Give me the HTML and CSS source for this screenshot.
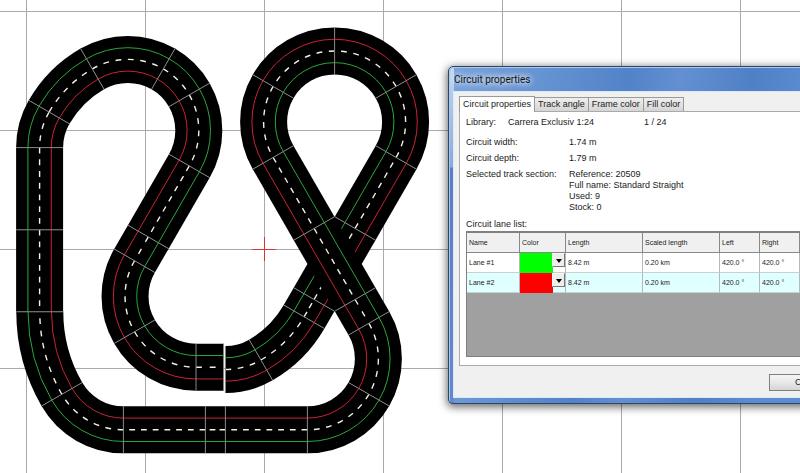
FILE: index.html
```html
<!DOCTYPE html>
<html lang="en">
<head>
<meta charset="utf-8">
<title>Circuit properties</title>
<link rel="stylesheet" href="styles.css">
</head>
<body>
<main class="desk">
  <svg class="canvas" role="img" aria-label="Circuit layout">
    <defs>
      <pattern id="grid" x="26" y="11" width="119" height="119" patternUnits="userSpaceOnUse">
        <path class="grid-line" d="M0.5 0V119M0 0.5H119"/>
      </pattern>
    </defs>
    <rect width="100%" height="100%" fill="url(#grid)"/>
    <path class="origin" d="M252 249.5H276M264.5 237V261"/>
    <g id="track"></g>
  </svg>

  <section class="dialog" role="dialog" aria-labelledby="dialog-title">
    <h1 class="title" id="dialog-title">Circuit properties</h1>
    <div class="client">
      <div class="tabs" role="tablist">
        <button class="tab tab-active" role="tab" aria-selected="true">Circuit properties</button>
        <button class="tab" role="tab">Track angle</button>
        <button class="tab" role="tab">Frame color</button>
        <button class="tab" role="tab">Fill color</button>
      </div>
      <div class="panel" role="tabpanel">
        <div class="library"><span>Library:</span><span>Carrera Exclusiv 1:24</span><span>1 / 24</span></div>
        <dl class="facts">
          <dt>Circuit width:</dt><dd>1.74 m</dd>
          <dt>Circuit depth:</dt><dd>1.79 m</dd>
          <dt>Selected track section:</dt>
          <dd>Reference: 20509<br>Full name: Standard Straight<br>Used: 9<br>Stock: 0</dd>
        </dl>
        <h2 class="list-title" id="lanes">Circuit lane list:</h2>
        <div class="list">
          <table class="lanes" aria-labelledby="lanes">
            <colgroup><col class="c-name"><col class="c-color"><col class="c-length"><col class="c-length"><col class="c-side"><col class="c-side"></colgroup>
            <thead>
              <tr><th>Name</th><th>Color</th><th>Length</th><th>Scaled length</th><th>Left</th><th>Right</th></tr>
            </thead>
            <tbody>
              <tr><td>Lane #1</td>
                <td class="color"><div class="pick"><select class="swatch green" aria-label="Lane #1 color"><option></option></select><span class="arrow"></span></div></td>
                <td>8.42 m</td><td>0.20 km</td><td>420.0 °</td><td>420.0 °</td></tr>
              <tr class="selected"><td>Lane #2</td>
                <td class="color"><div class="pick"><select class="swatch red" aria-label="Lane #2 color"><option></option></select><span class="arrow"></span></div></td>
                <td>8.42 m</td><td>0.20 km</td><td>420.0 °</td><td>420.0 °</td></tr>
            </tbody>
          </table>
        </div>
      </div>
      <div class="actions"><button class="close">Close</button></div>
    </div>
  </section>
</main>
<script src="track.js"></script>
</body>
</html>
```
FILE: styles.css
```css
* { box-sizing: border-box; }

body {
  margin: 0;
  overflow: hidden;
  background: #fff;
  color: #1a1a1a;
  font: 9px/11px "Liberation Sans", Arial, sans-serif;
}

button { font: inherit; color: inherit; }

.desk { position: relative; height: 100vh; overflow: hidden; }
.canvas { display: block; width: 100%; height: 100%; }

.grid-line { stroke: #aaa; stroke-width: 1; fill: none; }
.origin { stroke: #e03030; stroke-width: 1; fill: none; }
.road { stroke: #000; stroke-width: 47; fill: none; }
.lane-left { stroke: #28a83c; stroke-width: 1; fill: none; }
.lane-right { stroke: #cc2233; stroke-width: 1; fill: none; }
.center { stroke: #f4f0e4; stroke-width: 1.4; fill: none; }
.joint { stroke: #858585; stroke-width: 1; fill: none; }

.dialog {
  position: absolute;
  left: 448px;
  top: 66px;
  width: 60vw;
  padding: 1px 5px 5px 4px;
  border: 1px solid #2b4668;
  border-radius: 5px 5px 4px 4px;
  background:
    linear-gradient(#c3d8f2, #87a9dc 100px, #587fc2 101px, #6488cc) left / 5px 100% no-repeat,
    linear-gradient(100deg, #7ba4dc, #5282c8 180px, #6490d2 230px, #4f80c6 300px, #5c8cd2 360px);
  box-shadow: inset 1px 1px 0 #a9c8ec, 0 2px 8px 1px rgba(0, 0, 0, 0.6);
}

.title {
  margin: 0;
  padding: 0 1px;
  font: 10px/23px Roboto, "Open Sans", sans-serif;
  color: #111;
  text-shadow: 0 0 6px #fff, 0 0 6px #fff;
}

.client {
  padding: 4px 5px 0;
  border: 1px solid #dce9f8;
  background: #f0f0f0;
}

.tabs { display: flex; align-items: flex-end; }

.tab {
  height: 14px;
  padding: 0 3px;
  border: 1px solid #999;
  border-left: 0;
  border-bottom: 0;
  background: linear-gradient(#efefef, #d5d5d5);
  white-space: nowrap;
}

.tab-active {
  position: relative;
  height: 16px;
  margin-bottom: -1px;
  border-left: 1px solid #999;
  background: #fff;
}

.panel {
  padding: 5px 6px 8px;
  border: 1px solid #aaa;
  background: #fff;
}

.library { display: grid; grid-template-columns: 42px 136px auto; }

.facts {
  display: grid;
  grid-template-columns: 103px auto;
  row-gap: 5px;
  margin: 9px 0 6px;
}

.facts dd { margin: 0; }

.list-title { margin: 0 0 1px; font: inherit; }

.list {
  height: 126px;
  border: 1px solid #808080;
  border-top-width: 2px;
  background: #a0a0a0;
}

.lanes {
  width: 333px;
  table-layout: fixed;
  border-collapse: separate;
  border-spacing: 0;
  font-size: 7px;
  line-height: 9px;
}

.c-name { width: 53px; }
.c-color { width: 46px; }
.c-length { width: 77px; }
.c-side { width: 40px; }

.lanes th, .lanes td {
  height: 20px;
  padding: 0 2px;
  border-right: 1px solid #b8b8b8;
  border-bottom: 1px solid #c8d0d0;
  background: #fff;
  text-align: left;
  font-weight: normal;
  white-space: nowrap;
}

.lanes th { background: #f0f0f0; border-color: #888; }
.lanes .selected td { background: #e0ffff; }
.lanes .color { padding: 0; }

.pick { position: relative; height: 19px; }

.swatch {
  appearance: none;
  display: block;
  width: 33px;
  height: 20px;
  padding: 0;
  border: 0;
  border-radius: 0;
}

.green { background: #00ff00; }
.red { background: #ff0000; }

.arrow {
  position: absolute;
  top: 0;
  right: 0;
  width: 13px;
  height: 14px;
  border: 1px solid #f8f8f8;
  border-right-color: #777;
  border-bottom-color: #777;
  background: #eee;
  pointer-events: none;
}

.arrow::after {
  content: "";
  position: absolute;
  left: 3px;
  top: 5px;
  border: 3px solid transparent;
  border-top: 4px solid #000;
  border-bottom: 0;
}

.actions { padding: 8px 0 6px 310px; }

.close {
  display: block;
  width: 75px;
  height: 17px;
  padding: 0;
  border: 1px solid #808080;
  background: linear-gradient(#f4f4f4, #e8e8e8 50%, #d4d4d4);
}
```
FILE: track.js
```js
// Track sections: S = straight (length), L / R = curve (radius, degrees).
// Headings are in degrees, clockwise from the x axis.
const runs = [
  { x: 39.6, y: 312, heading: -90, sections: [
    ["S", 82.2], ["S", 82.2], ["R", 71, 30], ["R", 118, 30], ["R", 71, 60],
    ["R", 71, 30], ["R", 71, 60], ["S", 82], ["S", 27.5],
    ["L", 71, 60], ["L", 71, 60], ["S", 27.5]] },
  { x: 225.4, y: 369.5, heading: 0, sections: [
    ["L", 71, 30], ["L", 118, 30], ["S", 20], ["S", 82], ["S", 82],
    ["L", 71, 60], ["L", 71, 60], ["L", 71, 60], ["L", 71, 60],
    ["S", 82], ["S", 82], ["S", 27.5], ["R", 71, 60], ["R", 71, 60],
    ["S", 82], ["S", 20], ["S", 82], ["R", 71, 60], ["R", 165, 30]] }
];

const HALF = 23.5;
const LANE = 11.7;
const DASH = 5.8;
const track = document.getElementById("track");
const rad = (deg) => deg * Math.PI / 180;

// Point at a sideways offset from a pose; positive is to the right.
const side = (p, off) => [
  p.x - Math.sin(rad(p.heading)) * off,
  p.y + Math.cos(rad(p.heading)) * off
].map((v) => v.toFixed(2)).join(" ");

function advance(p, [kind, size, angle]) {
  if (kind === "S") {
    return { x: p.x + Math.cos(rad(p.heading)) * size,
             y: p.y + Math.sin(rad(p.heading)) * size, heading: p.heading };
  }
  const turn = kind === "R" ? 1 : -1;
  const cx = p.x - Math.sin(rad(p.heading)) * size * turn;
  const cy = p.y + Math.cos(rad(p.heading)) * size * turn;
  const heading = p.heading + angle * turn;
  return { x: cx + Math.sin(rad(heading)) * size * turn,
           y: cy - Math.cos(rad(heading)) * size * turn, heading };
}

function outline(a, b, [kind, size], off) {
  if (kind === "S") return `M${side(a, off)}L${side(b, off)}`;
  const r = kind === "R" ? size - off : size + off;
  return `M${side(a, off)}A${r} ${r} 0 0 ${kind === "R" ? 1 : 0} ${side(b, off)}`;
}

function draw(name, d) {
  const path = document.createElementNS("http://www.w3.org/2000/svg", "path");
  path.setAttribute("class", name);
  path.setAttribute("d", d);
  track.append(path);
  return path;
}

const joint = (p) => draw("joint", `M${side(p, -HALF)}L${side(p, HALF)}`);

for (const run of runs) {
  let pose = run;
  const placed = run.sections.map((section) => {
    const start = pose;
    pose = advance(pose, section);
    return { section, start, end: pose };
  });
  for (const { section, start, end } of placed) {
    draw("road", outline(start, end, section, 0));
    draw("lane-left", outline(start, end, section, -LANE));
    draw("lane-right", outline(start, end, section, LANE));
    const center = draw("center", outline(start, end, section, 0));
    const length = center.getTotalLength();
    const period = length / Math.max(1, Math.round(length / 11.9));
    center.setAttribute("stroke-dasharray", `${DASH} ${period - DASH}`);
    if (start.heading === -90) center.setAttribute("stroke-dashoffset", DASH);
  }
  for (const { start } of placed) joint(start);
  joint(pose);
}
```
